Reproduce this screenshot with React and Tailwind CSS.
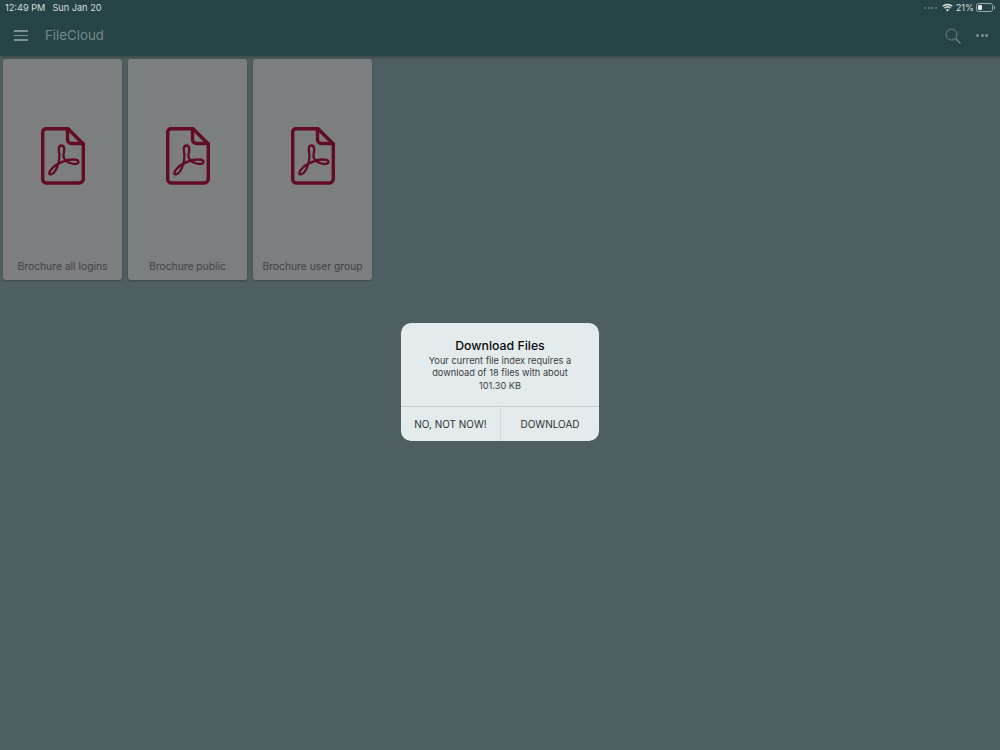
import React from "react";

const font = { fontFamily: 'Inter, "Liberation Sans", Arial, sans-serif' };

function PdfIcon() {
  return (
    <svg width="46" height="60" viewBox="0 0 46 60" fill="none" stroke="#620c24" strokeLinejoin="round" strokeLinecap="round">
      <path d="M6 2.700H28L43.300 18V53A4 4 0 0 1 39.300 57H6A3.500 3.500 0 0 1 2.700 53.500V6A3.300 3.300 0 0 1 6 2.700Z" strokeWidth="3.400" />
      <path d="M27.500 3V13.500A4 4 0 0 0 31.500 17.500H43" strokeWidth="3.400" />
      <path d="M32.500 33.500C27 33.500 17 37 12.500 42C8 46.500 8.500 49.500 12 48C16 46.500 19.500 37 19.500 29C18.500 24 18 19.500 21.500 19.500C25 19.500 24.500 24 23.500 29C23 32 25.500 35.500 30 37C34 38.500 38.500 38.500 38.500 35.800C38.500 33.500 35.500 33.500 32.500 33.500Z" strokeWidth="2.300" />
    </svg>
  );
}

function Card({ label }) {
  return (
    <div className="w-[119px] h-[221px] bg-[#7c7e7f] rounded-[3px] shadow-[0_1px_2px_rgba(0,0,0,0.25)] flex flex-col items-center">
      <div className="mt-[67px]"><PdfIcon /></div>
      <div className="mt-auto mb-[7px] text-[10.300px] leading-[14px] text-[#404447] whitespace-nowrap">{label}</div>
    </div>
  );
}

export default function App() {
  return (
    <div className="relative w-[1000px] h-[750px] overflow-hidden bg-[#4f5e60] flex flex-col" style={font}>
      <div className="bg-[#264446] h-[56px] shrink-0 flex flex-col shadow-[0_1px_3px_rgba(0,0,0,0.3)]">
        <div className="h-[14px] pt-[1px] flex items-center justify-between pl-[5px] pr-[5px] text-[9.200px] leading-[13px] text-[#d5dcdc]">
          <div className="flex gap-[7px]">
            <span>12:49 PM</span>
            <span>Sun Jan 20</span>
          </div>
          <div className="flex items-center gap-[3px]">
            <div className="flex gap-[1.500px] mr-[2px]">
              <span className="w-[2px] h-[2px] rounded-full bg-[#6d8284]" />
              <span className="w-[2px] h-[2px] rounded-full bg-[#6d8284]" />
              <span className="w-[2px] h-[2px] rounded-full bg-[#6d8284]" />
              <span className="w-[2px] h-[2px] rounded-full bg-[#6d8284]" />
            </div>
            <svg width="11" height="9" viewBox="0 0 11 9" fill="none" stroke="#dfe5e5" strokeWidth="1.500">
              <path d="M0.800 3.200A7 7 0 0 1 10.200 3.200" />
              <path d="M2.600 5.100A4.300 4.300 0 0 1 8.400 5.100" />
              <path d="M5.500 8.500L4 6.800A2.200 2.200 0 0 1 7 6.800Z" fill="#dfe5e5" stroke="none" />
            </svg>
            <span>21%</span>
            <div className="relative w-[17px] h-[9px] -ml-[1px] mr-[2px] rounded-[2.500px] border border-[#9dabab] p-[1px]">
              <div className="w-[4px] h-full bg-[#e5eaea] rounded-[1px]" />
              <div className="absolute -right-[2.500px] top-[2px] w-[1px] h-[3px] bg-[#9dabab]" />
            </div>
          </div>
        </div>
        <div className="flex-1 flex items-center pl-[14px] pr-[12px] pt-[1px]">
          <div className="w-[14px] flex flex-col gap-[3px]">
            <span className="h-[1.500px] bg-[#7d9294]" />
            <span className="h-[1.500px] bg-[#7d9294]" />
            <span className="h-[1.500px] bg-[#7d9294]" />
          </div>
          <span className="ml-[17px] text-[13.300px] text-[#75898b]">FileCloud</span>
          <div className="ml-auto flex items-center gap-[15px]">
            <svg width="16" height="16" viewBox="0 0 16 16" fill="none" stroke="#6f8587" strokeWidth="1">
              <circle cx="6.500" cy="6.500" r="5.500" />
              <path d="M10.500 10.500L15.500 15.500" strokeWidth="1.200" />
            </svg>
            <div className="flex gap-[1.500px]">
              <span className="w-[3px] h-[3px] rounded-full bg-[#7d9294]" />
              <span className="w-[3px] h-[3px] rounded-full bg-[#7d9294]" />
              <span className="w-[3px] h-[3px] rounded-full bg-[#7d9294]" />
            </div>
          </div>
        </div>
      </div>

      <div className="flex gap-[6px] pl-[3px] pt-[3px]">
        <Card label="Brochure all logins" />
        <Card label="Brochure public" />
        <Card label="Brochure user group" />
      </div>

      <div className="absolute left-[401px] top-[323px] w-[198px] h-[118px] rounded-[10px] bg-[#e3ebed] flex flex-col overflow-hidden">
        <div className="h-[84px] border-b border-[#c9d0d2] flex flex-col items-center pt-[15px]">
          <div className="text-[12.300px] font-medium leading-[15px] text-[#0c0c0c] whitespace-nowrap">Download Files</div>
          <div className="mt-[1.500px] text-[9.250px] leading-[12.500px] text-[#3a3d3e] text-center whitespace-nowrap">
            Your current file index requires a<br />download of 18 files with about<br />101.30 KB
          </div>
        </div>
        <div className="flex-1 flex text-[10px] text-[#303334]">
          <div className="w-[100px] flex items-center justify-center border-r border-[#d3dadc]">NO, NOT NOW!</div>
          <div className="flex-1 flex items-center justify-center">DOWNLOAD</div>
        </div>
      </div>
    </div>
  );
}
